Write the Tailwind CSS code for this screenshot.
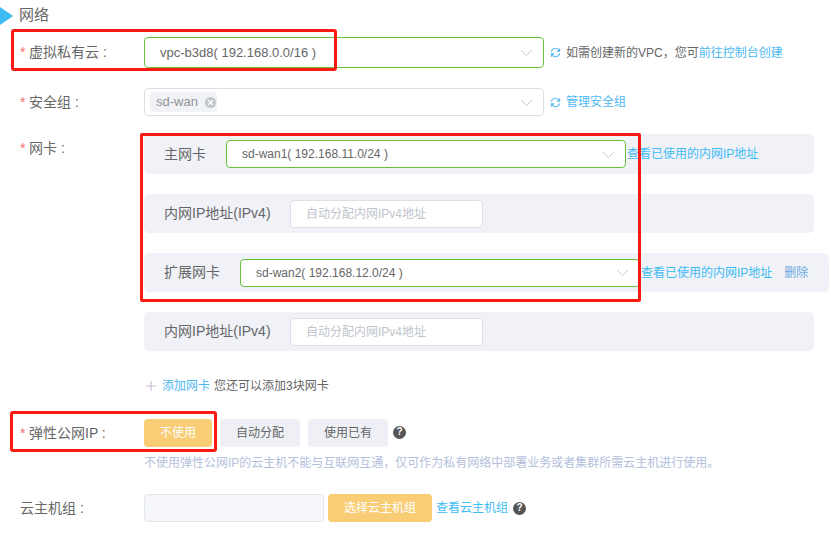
<!DOCTYPE html>
<html lang="zh-CN">

<head>
    <meta charset="UTF-8">
    <title>网络</title>
    <script src="https://cdn.jsdelivr.net/npm/@tailwindcss/browser@4"></script>
</head>

<body class="bg-white">
    <div class="relative w-[831px] h-[545px] overflow-hidden text-[13px] text-[#666] font-['Liberation_Sans','Noto_Sans_CJK_SC',sans-serif]">

        <!-- title -->
        <div class="flex items-center h-[17px] mt-[7px]">
            <div class="w-0 h-0 border-y-[9px] border-y-transparent border-l-[13px] border-l-[#3ebcf5]"></div>
            <span class="ml-[6px] text-[15px] text-[#666]">网络</span>
        </div>

        <!-- vpc -->
        <div class="flex items-center mt-[13px] h-[31px]">
            <label class="w-[144px] pl-[20px] text-[14px] flex whitespace-pre"><span class="text-[#f56c6c] w-[9px]">*</span>虚拟私有云 :</label>
            <div class="flex items-center justify-between w-[400px] h-full border border-[#67c23a] rounded-[4px] pl-[15px] pr-[10px]">
                <span>vpc-b3d8( 192.168.0.0/16 )</span>
                <svg class="w-[13px] h-[13px]" viewBox="0 0 13 13" fill="none" stroke="#c8ccd4"><path d="M1 4l5.500 5.500L12 4" /></svg>
            </div>
            <svg class="ml-[6px] w-[11px] h-[11px]" viewBox="0 0 12 12" fill="none" stroke="#5bb8ee" stroke-width="1.200"><path d="M1.500 5A4.500 4.500 0 0 1 10 4M10.500 7A4.500 4.500 0 0 1 2 8M10.500 1.500V4.500H7.500M1.500 10.500V7.500H4.500" /></svg>
            <span class="ml-[5px] text-[12px]">如需创建新的VPC，您可<a class="text-[#4db8f0]">前往控制台创建</a></span>
        </div>

        <!-- security group -->
        <div class="flex items-center mt-[20px] h-[28px]">
            <label class="w-[144px] pl-[20px] text-[14px] flex whitespace-pre"><span class="text-[#f56c6c] w-[9px]">*</span>安全组 :</label>
            <div class="flex items-center justify-between w-[400px] h-full border border-[#dcdfe6] rounded-[4px] pl-[5px] pr-[10px]">
                <div class="flex items-center h-[20px] w-[67px] bg-[#f0f2f5] rounded-[4px] pl-[6px] text-[#909399] whitespace-nowrap">
                    <span>sd-wan</span>
                    <span class="ml-[7px] shrink-0 flex items-center justify-center w-[11px] h-[11px] rounded-full bg-[#c0c4cc]">
                        <svg class="w-[7px] h-[7px]" viewBox="0 0 7 7" stroke="#fff" stroke-width="1.200"><path d="M1 1l5 5M6 1L1 6" /></svg>
                    </span>
                </div>
                <svg class="w-[13px] h-[13px]" viewBox="0 0 13 13" fill="none" stroke="#c8ccd4"><path d="M1 4l5.500 5.500L12 4" /></svg>
            </div>
            <svg class="ml-[6px] w-[11px] h-[11px]" viewBox="0 0 12 12" fill="none" stroke="#5bb8ee" stroke-width="1.200"><path d="M1.500 5A4.500 4.500 0 0 1 10 4M10.500 7A4.500 4.500 0 0 1 2 8M10.500 1.500V4.500H7.500M1.500 10.500V7.500H4.500" /></svg>
            <a class="ml-[5px] text-[12px] text-[#4db8f0]">管理安全组</a>
        </div>

        <!-- nics -->
        <div class="flex mt-[18px]">
            <label class="w-[144px] pl-[20px] text-[14px] flex h-[28px] items-center whitespace-pre"><span class="text-[#f56c6c] w-[9px]">*</span>网卡 :</label>
            <div class="flex flex-col gap-[20px]">
                <div class="flex items-center w-[670px] h-[40px] bg-[#f0f2f7] rounded-[5px] pl-[20px]">
                    <span class="w-[62px] text-[14px]">主网卡</span>
                    <div class="flex items-center justify-between w-[400px] h-[28px] bg-white border border-[#67c23a] rounded-[4px] pl-[15px] pr-[10px]">
                        <span class="text-[12px]">sd-wan1( 192.168.11.0/24 )</span>
                        <svg class="w-[13px] h-[13px]" viewBox="0 0 13 13" fill="none" stroke="#c8ccd4"><path d="M1 4l5.500 5.500L12 4" /></svg>
                    </div>
                    <a class="ml-[1px] text-[12px] text-[#3ebcf5]">查看已使用的内网IP地址</a>
                </div>
                <div class="flex items-center w-[670px] h-[39px] bg-[#f0f2f7] rounded-[5px] pl-[20px]">
                    <span class="w-[126px] whitespace-nowrap text-[14px]">内网IP地址(IPv4)</span>
                    <div class="flex items-center w-[193px] h-[28px] bg-white border border-[#dcdfe6] rounded-[4px] pl-[15px] text-[12px] text-[#c0c4cc]">自动分配内网IPv4地址</div>
                </div>
                <div class="flex items-center w-[685px] h-[39px] bg-[#f0f2f7] rounded-[5px] pl-[20px]">
                    <span class="w-[76px] text-[14px]">扩展网卡</span>
                    <div class="flex items-center justify-between w-[400px] h-[28px] bg-white border border-[#67c23a] rounded-[4px] pl-[15px] pr-[10px]">
                        <span class="text-[12px]">sd-wan2( 192.168.12.0/24 )</span>
                        <svg class="w-[13px] h-[13px]" viewBox="0 0 13 13" fill="none" stroke="#c8ccd4"><path d="M1 4l5.500 5.500L12 4" /></svg>
                    </div>
                    <a class="ml-[1px] text-[12px] text-[#3ebcf5]">查看已使用的内网IP地址</a>
                    <a class="ml-[12px] text-[12px] text-[#6fa8dc]">删除</a>
                </div>
                <div class="flex items-center w-[670px] h-[39px] bg-[#f0f2f7] rounded-[5px] pl-[20px]">
                    <span class="w-[126px] whitespace-nowrap text-[14px]">内网IP地址(IPv4)</span>
                    <div class="flex items-center w-[193px] h-[28px] bg-white border border-[#dcdfe6] rounded-[4px] pl-[15px] text-[12px] text-[#c0c4cc]">自动分配内网IPv4地址</div>
                </div>
            </div>
        </div>

        <!-- add nic -->
        <div class="flex items-center ml-[146px] mt-[27px] h-[16px] text-[12px]">
            <svg class="w-[10px] h-[10px]" viewBox="0 0 10 10" stroke="#c9b8d0"><path d="M5 0v10M0 5h10" /></svg>
            <a class="ml-[6px] text-[#4db8f0]">添加网卡</a>
            <span class="ml-[4px]">您还可以添加3块网卡</span>
        </div>

        <!-- eip -->
        <div class="flex items-center mt-[25px] h-[28px]">
            <label class="w-[144px] pl-[20px] text-[14px] flex whitespace-pre"><span class="text-[#f56c6c] w-[9px]">*</span>弹性公网IP :</label>
            <button class="w-[68px] h-full bg-[#f8cd75] rounded-[4px] text-white text-[12px]">不使用</button>
            <button class="ml-[8px] w-[80px] h-full bg-[#eef0f5] rounded-[4px] text-[12px]">自动分配</button>
            <button class="ml-[8px] w-[80px] h-full bg-[#eef0f5] rounded-[4px] text-[12px]">使用已有</button>
            <span class="ml-[5px] mb-[2px] flex items-center justify-center w-[13px] h-[13px] rounded-full bg-[#555] text-white text-[10px] font-bold leading-none">?</span>
        </div>
        <p class="ml-[144px] mt-[8px] h-[16px] leading-[16px] text-[12px] text-[#b3c0dc]">不使用弹性公网IP的云主机不能与互联网互通，仅可作为私有网络中部署业务或者集群所需云主机进行使用。</p>

        <!-- host group -->
        <div class="flex items-center mt-[23px] h-[28px]">
            <label class="w-[144px] pl-[20px] text-[14px] whitespace-pre">云主机组 :</label>
            <div class="w-[180px] h-full bg-[#f5f7fa] border border-[#e4e7ed] rounded-[4px]"></div>
            <button class="ml-[4px] w-[104px] h-full bg-[#f8cd75] rounded-[4px] text-white text-[12px]">选择云主机组</button>
            <a class="ml-[4px] text-[12px] text-[#3ebcf5]">查看云主机组</a>
            <span class="ml-[5px] flex items-center justify-center w-[13px] h-[13px] rounded-full bg-[#555] text-white text-[10px] font-bold leading-none">?</span>
        </div>

        <!-- red annotation boxes -->
        <div class="absolute left-[11px] top-[29px] w-[326px] h-[42px] border-[3px] border-[#fb1a12] rounded-[3px]"></div>
        <div class="absolute left-[140px] top-[133px] w-[501px] h-[169px] border-[3px] border-[#fb1a12] rounded-[2px]"></div>
        <div class="absolute left-[10px] top-[411px] w-[207px] h-[41px] border-[3px] border-[#fb1a12] rounded-[3px]"></div>
    </div>
</body>

</html>
